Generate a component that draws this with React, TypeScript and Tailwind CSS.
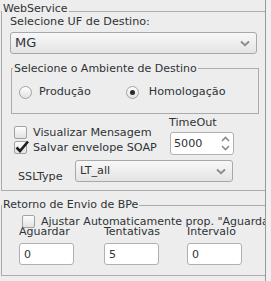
import React from "react";

const Chevron = ({ className = "" }: { className?: string }) => (
  <svg width="10" height="7" viewBox="0 0 10 7" className={className}>
    <path d="M1 1.5 L5 5.2 L9 1.5" fill="none" stroke="#8a8a8a" strokeWidth="1.8" />
  </svg>
);

const Combo = ({ text, className = "" }: { text: string; className?: string }) => (
  <div
    className={`flex items-center justify-between rounded-[3px] border border-[#a8a8a8] bg-gradient-to-b from-[#f8f8f8] to-[#e4e4e4] ${className}`}
  >
    {text}
    <Chevron className="mr-[6px]" />
  </div>
);

const Radio = ({ checked = false }: { checked?: boolean }) => (
  <div className="flex h-[13px] w-[13px] items-center justify-center rounded-full border border-[#a2a2a2] bg-gradient-to-b from-[#fdfdfd] to-[#e2e2e2]">
    {checked && <div className="h-[5px] w-[5px] rounded-full bg-[#2a2a2a]" />}
  </div>
);

const Check = ({ checked = false }: { checked?: boolean }) => (
  <div className="relative h-[13px] w-[13px] shrink-0 rounded-[2px] border border-[#a2a2a2] bg-gradient-to-b from-[#fdfdfd] to-[#e2e2e2]">
    {checked && (
      <svg width="16" height="15" viewBox="0 0 16 15" className="absolute left-[-1px] top-[-3px]">
        <path d="M2.5 8.5 L6 12 L14 2.5" fill="none" stroke="#1e1e1e" strokeWidth="2.6" />
      </svg>
    )}
  </div>
);

const Field = ({ text, className = "" }: { text: string; className?: string }) => (
  <div
    className={`flex items-center rounded-[3px] border border-[#b0b0b0] bg-white pl-[4px] ${className}`}
  >
    {text}
  </div>
);

export default function App() {
  return (
    <div
      className="flex h-[281px] w-[271px] bg-[#ededed] text-[11.2px] leading-[14px] text-[#2e3436]"
      style={{ fontFamily: '"DejaVu Sans", sans-serif' }}
    >
      <div className="h-full w-[265px] overflow-hidden">
        {/* WebService group */}
        <div className="relative ml-[1px] mt-[11px] h-[180px] w-[290px] border border-[#ababab]">
          <div className="absolute left-[0px] top-[-10px] bg-[#ededed] px-[1px] text-[11px] leading-[13px]">
            WebService
          </div>
          <div className="ml-[8px] mt-[3px] h-[14px]">Selecione UF de Destino:</div>
          <Combo text="MG" className="ml-[8px] mt-[3px] h-[22px] w-[247px] pl-[4px] text-[13px]" />

          {/* Ambiente group */}
          <div className="relative ml-[9px] mt-[14px] h-[46px] w-[248px] border border-[#ababab]">
            <div className="absolute left-[1px] top-[-7px] bg-[#ededed] px-[1px] text-[11px] leading-[13px]">
              Selecione o Ambiente de Destino
            </div>
            <div className="ml-[7px] mt-[16px] flex h-[14px] items-center">
              <Radio />
              <span className="ml-[7px]">Produção</span>
              <div className="ml-[35px]">
                <Radio checked />
              </div>
              <span className="ml-[10px]">Homologação</span>
            </div>
          </div>

          {/* checks + timeout */}
          <div className="mt-[2px] flex">
            <div className="ml-[12px] w-[155px] pt-[9px]">
              <div className="flex h-[15px] items-center">
                <Check />
                <span className="ml-[6px]">Visualizar Mensagem</span>
              </div>
              <div className="flex h-[15px] items-center">
                <Check checked />
                <span className="ml-[6px]">Salvar envelope SOAP</span>
              </div>
            </div>
            <div>
              <div className="h-[14px]">TimeOut</div>
              <div className="relative ml-[1px] mt-[2px] flex h-[23px] w-[64px] items-center rounded-[3px] border border-[#b0b0b0] bg-white pl-[3px]">
                5000
                <div className="absolute right-[3px] top-[3px] flex flex-col gap-[3px]">
                  <svg width="9" height="6" viewBox="0 0 9 6">
                    <path d="M1 5 L4.5 1.5 L8 5" fill="none" stroke="#8a8a8a" strokeWidth="1.6" />
                  </svg>
                  <svg width="9" height="6" viewBox="0 0 9 6">
                    <path d="M1 1 L4.5 4.5 L8 1" fill="none" stroke="#8a8a8a" strokeWidth="1.6" />
                  </svg>
                </div>
              </div>
            </div>
          </div>

          {/* SSLType */}
          <div className="mt-[5px] flex">
            <div className="ml-[16px] mt-[10px] w-[57px]">SSLType</div>
            <Combo text="LT_all" className="h-[22px] w-[158px] pl-[4px]" />
          </div>
        </div>

        {/* Retorno group */}
        <div className="relative ml-[1px] mt-[14px] h-[71px] w-[290px] border border-[#ababab] text-[11px] leading-[13px]">
          <div className="absolute left-[0px] top-[-8px] bg-[#ededed] px-[1px]">
            Retorno de Envio de BPe
          </div>
          <div className="ml-[20px] mt-[9px] flex h-[13px] items-center whitespace-nowrap">
            <Check />
            <span className="ml-[6px]">Ajustar Automaticamente prop. "Aguardar"</span>
          </div>
          <div className="-mt-[3px] flex">
            <div className="ml-[17px] w-[85px]">
              <div className="h-[13px]">Aguardar</div>
              <Field text="0" className="mt-[5px] h-[22px] w-[55px]" />
            </div>
            <div className="w-[83px]">
              <div className="h-[13px]">Tentativas</div>
              <Field text="5" className="mt-[5px] h-[22px] w-[55px]" />
            </div>
            <div>
              <div className="h-[13px]">Intervalo</div>
              <Field text="0" className="mt-[5px] h-[22px] w-[55px]" />
            </div>
          </div>
        </div>
      </div>
      <div className="h-full w-[1px] bg-[#9a9a9a]" />
      <div className="h-full flex-1 bg-[#f0f0f0]" />
    </div>
  );
}
